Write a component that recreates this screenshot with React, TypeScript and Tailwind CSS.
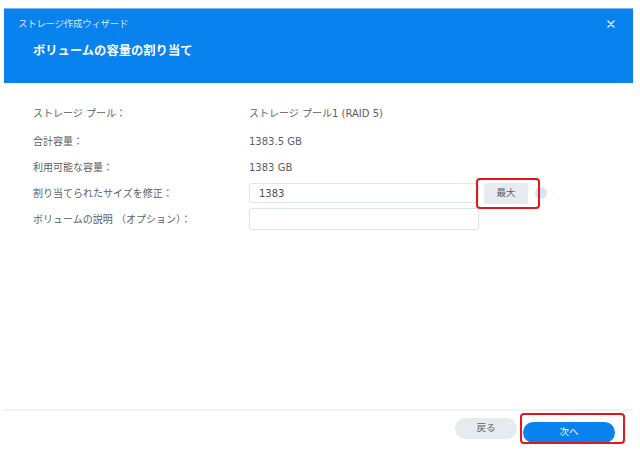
import React from "react";

const font = { fontFamily: '"DejaVu Sans", "Noto Sans CJK JP", sans-serif' };

export default function App() {
  return (
    <div className="w-[640px] h-[458px] bg-white overflow-hidden flex flex-col pl-[4px] pr-[7px] pt-[8px]" style={font}>
      <div className="h-[75px] bg-[#0782ee] border-t border-[#79b8f2] flex flex-col px-[14px]">
        <div className="flex items-center justify-between h-[29px] pt-[1px]">
          <span className="text-[9.5px] text-[#d6e8fb] tracking-[-0.3px]">ストレージ作成ウィザード</span>
          <svg width="8" height="8" viewBox="0 0 8 8" className="mr-[4px]">
            <path d="M1 1 L7 7 M7 1 L1 7" stroke="#dcebfb" strokeWidth="1.5" strokeLinecap="round" />
          </svg>
        </div>
        <div className="h-[26px] flex items-center pl-[15px]">
          <span className="text-[12.3px] font-bold text-white">ボリュームの容量の割り当て</span>
        </div>
      </div>

      <div className="flex-1 flex flex-col pt-[17px] pl-[29px] text-[10px] text-[#5a5f66]">
        <div className="grid grid-cols-[216px_1fr] h-[26px] items-center mb-[2px]">
          <span>ストレージ プール：</span>
          <span>ストレージ プール1 (RAID 5)</span>
        </div>
        <div className="grid grid-cols-[216px_1fr] h-[26px] items-center">
          <span>合計容量：</span>
          <span>1383.5 GB</span>
        </div>
        <div className="grid grid-cols-[216px_1fr] h-[26px] items-center">
          <span>利用可能な容量：</span>
          <span>1383 GB</span>
        </div>
        <div className="grid grid-cols-[216px_1fr] h-[26px] items-center">
          <span>割り当てられたサイズを修正：</span>
          <div className="flex items-center">
            <div className="w-[230px] h-[20px] border border-[#dde4ec] rounded-[3px] flex items-center pl-[9px] text-[#4a4f55]">1383</div>
            <div className="relative ml-[5px] flex items-center">
              <div className="w-[44px] h-[21px] bg-[#e6ebf0] rounded-[3px] flex items-center justify-center text-[9.5px] text-[#5a5f66]">最大</div>
              <div className="ml-[7px] w-[12px] h-[12px] rounded-full bg-[#d3e6f8]" />
              <div className="absolute left-[-8px] top-[-5px] w-[64px] h-[31px] border-2 border-[#e8141b] rounded-[4px]" />
            </div>
          </div>
        </div>
        <div className="grid grid-cols-[216px_1fr] h-[26px] items-center">
          <span>ボリュームの説明 （オプション）：</span>
          <div className="w-[230px] h-[22px] border border-[#dde4ec] rounded-[3px]" />
        </div>
      </div>

      <div className="h-[2px] bg-[#eef3f8]" />
      <div className="h-[47px] flex justify-end items-start pt-[7px] pr-[18px]">
        <button className="w-[62px] h-[21px] rounded-full bg-[#e6ebf0] text-[9.5px] text-[#5a5f66]">戻る</button>
        <div className="relative ml-[6px]">
          <button className="w-[92px] h-[21px] rounded-full bg-[#0782ee] text-[9.5px] text-white">次へ</button>
          <div className="absolute left-[-3px] top-[-5px] w-[105px] h-[31px] border-2 border-[#e8141b] rounded-[4px]" />
        </div>
      </div>
    </div>
  );
}
